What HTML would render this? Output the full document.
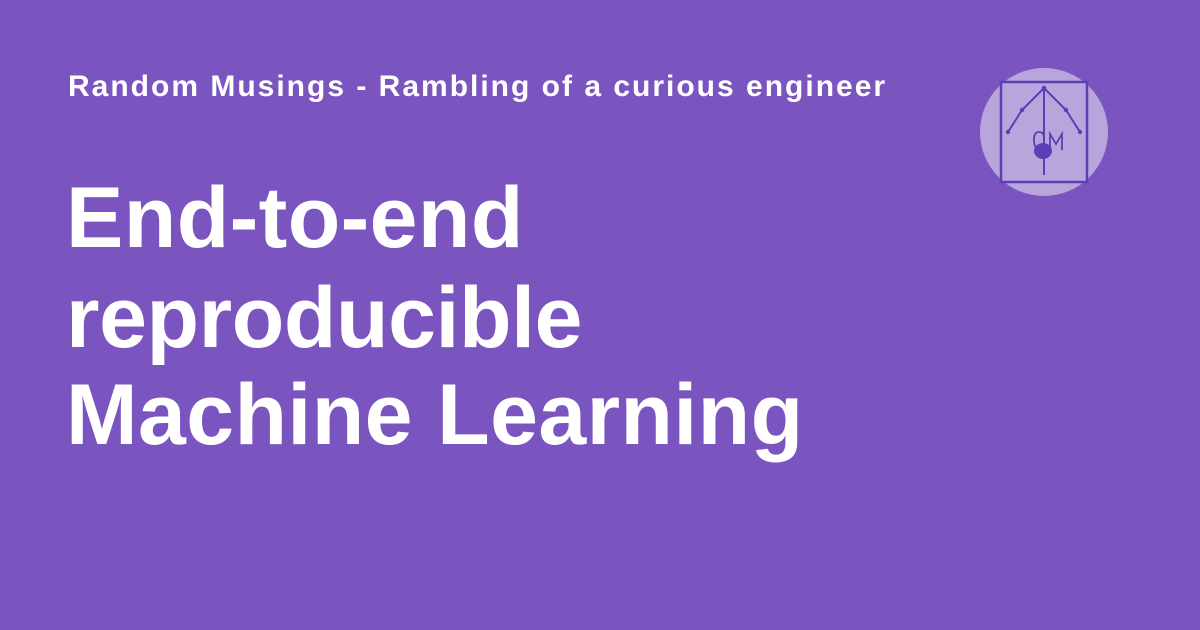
<!DOCTYPE html>
<html><head><style>
body{margin:0;width:1200px;height:630px;background:#7b55bf;overflow:hidden;font-family:"Liberation Sans",Arial,sans-serif;color:#fff;position:relative}
.sub{position:absolute;left:68px;top:70px;font-size:30px;font-weight:bold;letter-spacing:2px;white-space:nowrap}
.t{position:absolute;left:66px;font-size:86px;font-weight:bold;line-height:1;white-space:nowrap;letter-spacing:0.4px}
</style></head><body>
<div class="sub">Random Musings - Rambling of a curious engineer</div>
<div class="t" style="top:175px">End-to-end</div>
<div class="t" style="top:275px;letter-spacing:-0.4px">reproducible</div>
<div class="t" style="top:372px">Machine Learning</div>
<svg width="1200" height="630" style="position:absolute;left:0;top:0">
<circle cx="1044" cy="132" r="64" fill="#b8a5dc"/>
<rect x="1001" y="82" width="86" height="100" fill="none" stroke="#5a3fb5" stroke-width="2.5"/>
<g stroke="#5a3fb5" stroke-width="2" fill="none">
<line x1="1044" y1="88" x2="1044" y2="175"/>
<polyline points="1008,132 1022,110 1044,88 1066,110 1080,132"/>
</g>
<g fill="#5a3fb5">
<circle cx="1044" cy="88" r="2.2"/><circle cx="1022" cy="110" r="2.2"/><circle cx="1066" cy="110" r="2.2"/><circle cx="1008" cy="132" r="2.2"/><circle cx="1080" cy="132" r="2.2"/>
<ellipse cx="1043" cy="151" rx="9" ry="8"/>
</g>
<path d="M1034 140 q0-8 5-8 q5 0 5 6 M1034 140 q0 10 8 12" stroke="#5a3fb5" stroke-width="1.8" fill="none"/>
<path d="M1050 150 V134 L1056 144 L1062 134 V150" stroke="#5a3fb5" stroke-width="1.8" fill="none"/>
</svg>
</body></html>
